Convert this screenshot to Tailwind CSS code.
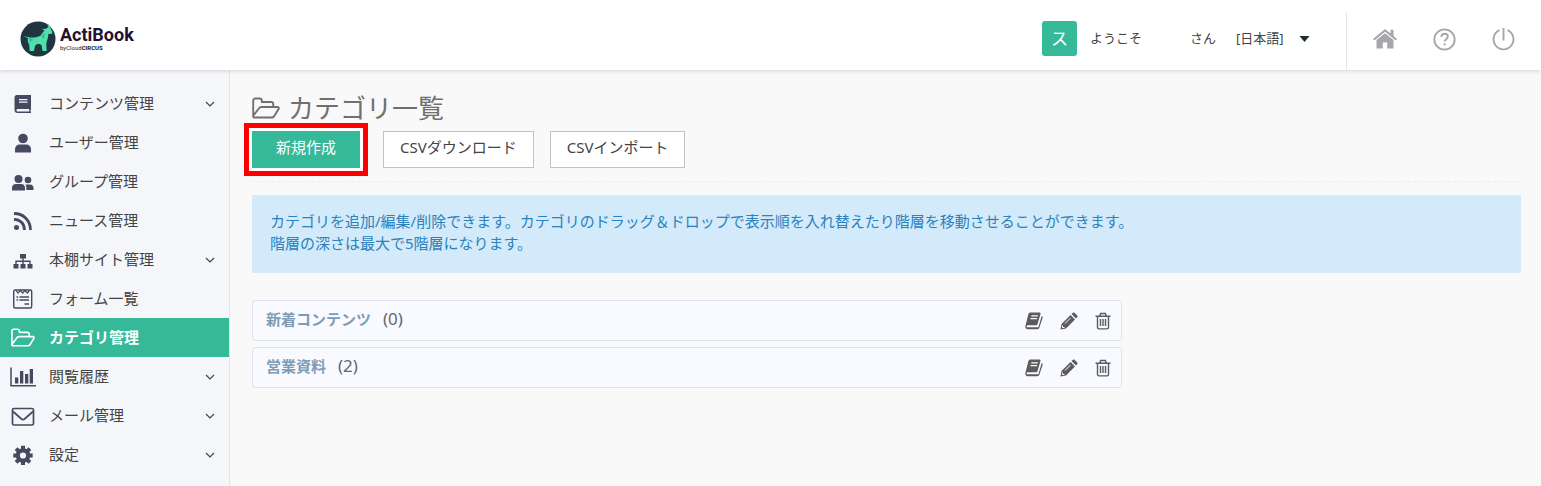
<!DOCTYPE html>
<html lang="ja">
<head>
  <meta charset="UTF-8" />
  <title>カテゴリ一覧 | ActiBook</title>
  <meta name="viewport" content="width=device-width, initial-scale=1" />
  <script src="https://cdn.jsdelivr.net/npm/@tailwindcss/browser@4"></script>
</head>
<body class="min-h-screen flex flex-col bg-[#f9f9f9] text-[#444] text-[15px] font-['Noto_Sans','Noto_Sans_CJK_JP',sans-serif]">

  <!-- Shared icons -->
  <svg class="hidden">
    <symbol id="chevron" viewBox="0 0 10 10"><path d="M1 3l4 4 4-4" fill="none" stroke="currentColor" stroke-width="1.2" /></symbol>
    <symbol id="folder" viewBox="0 0 28 22">
      <path d="M1.200 19V3.500a2 2 0 0 1 2-2h4.600a2 2 0 0 1 2 2V5h9.400a2 2 0 0 1 2 2V10M2.600 20.500h17.200a3 3 0 0 0 2.200-1l4.600-7.500c.6-1.200 0-2-1.200-2H9.500a3 3 0 0 0-2.500 1.200L1.500 18.500c-.7 1.200-.2 2 1.100 2z" fill="none" stroke="currentColor" stroke-width="1.900" stroke-linejoin="round" />
    </symbol>
    <symbol id="book" viewBox="0 0 18 18">
      <path fill-rule="evenodd" d="M5.500 .5h8.700c1 0 1.600.7 1.300 1.600l-3 9.900c-.2.800-.8 1.300-1.600 1.300H2.700c-.7 0-1 .3-1.100.9-.1.700.2 1.100 1.200 1.100h9.600c.6 0 1-.3 1.200-.9L16.700 4c.9.300 1.200 1 .9 1.900l-3.200 9.700c-.3.900-1.100 1.600-2 1.600H2.800c-1.700 0-2.900-1.700-2.400-3.200L3.400 2.100C3.700 1.200 4.500 .5 5.500 .5zM6.500 3.300l-.4 1.300h6.500l.4-1.300zM5.700 6l-.4 1.300h6.500l.4-1.300z" fill="currentColor" />
    </symbol>
    <symbol id="pencil" viewBox="0 0 18 18">
      <path d="M.5 17.500l1-5.500L10.600 3 15 7.400 6 16.500z" fill="currentColor" />
      <path d="M11.500 2.100l1.200-1.200c.6-.6 1.400-.6 2 0l2.400 2.400c.6.600.6 1.400 0 2L15.900 6.500z" fill="currentColor" />
      <path d="M2.500 13.500v2h2M5 11.500l5.500-5.500" fill="none" stroke="#f8faff" stroke-width="1" />
    </symbol>
    <symbol id="trash" viewBox="0 0 16 18">
      <path d="M.5 4.200h15M4.800 4l.8-2.500h4.800l.8 2.500M2.500 4.500v10.700c0 1 .6 1.700 1.500 1.700h8c.9 0 1.500-.7 1.500-1.700V4.500M5.500 7v7M8 7v7M10.500 7v7" fill="none" stroke="currentColor" stroke-width="1.400" />
    </symbol>
  </svg>

  <header class="relative z-10 h-[70px] flex items-stretch justify-between bg-white shadow-[0_1px_4px_rgba(0,0,0,0.15)]">
    <a href="#" class="flex items-center gap-1 pl-5 pt-2">
      <svg class="size-9" viewBox="0 0 36 36">
        <circle cx="18" cy="18" r="17.500" fill="#1f3640" />
        <path d="M3.500 15l5 1.200c4 .8 9 .5 12-1.700l4-5-2.500-1.500 4-.3c.8-.8 1.500-1.200 2.500-1.200-.2-1.500-1-2.500-2-3.500 2.500.8 4 2.500 4.300 5l1.700 3.300-1 1.700-3-.2c-.3 2.500-.6 4.500-1.600 7l-.6 3 .3 7.200h-4l-1-5.500c-1.500-2-5-2-6.500.2L14 30H9.700l-.5-6.500c-1.500-2-1.700-4-1.200-6.300z" fill="#4fe0ae" />
        <path d="M9 17l4 1-3 4zM21 15l4-3-1 6z" fill="#36b992" />
      </svg>
      <span class="flex flex-col text-[#23122f] font-[Roboto,sans-serif]">
        <span class="text-[18px] leading-[18px] font-bold">ActiBook</span>
        <span class="text-[6px] leading-[8px]">byCloud<b>CIRCUS</b></span>
      </span>
    </a>

    <div class="flex items-stretch text-[13px]">
      <div class="flex items-center pt-[7px] pr-8">
        <span class="size-[35px] mr-[13px] flex items-center justify-center rounded-[3px] bg-[#36b998] text-white text-[17px]">ス</span>
        <span class="mr-12">ようこそ</span>
        <span class="mr-5">さん</span>
        <span class="relative flex items-center">
          <select aria-label="言語" class="appearance-none w-[78px] bg-transparent">
            <option>[日本語]</option>
            <option>[English]</option>
          </select>
          <svg class="absolute right-1 w-[11px] h-[6px] pointer-events-none" viewBox="0 0 10 6"><path d="M0 0h10L5 6z" fill="#1f2d33" /></svg>
        </span>
      </div>
      <nav class="mt-3 pl-[26px] pr-[26px] pb-1 flex items-center gap-9 border-l border-[#e6e6e6] text-[#a7a7ab]">
        <a href="#" aria-label="ホーム">
          <svg class="w-6 h-5" viewBox="0 0 24 20">
            <path d="M12 0L0 10l1.300 1.500L12 2.800l10.700 8.700L24 10l-3.500-3V.8h-3v3.700z" fill="currentColor" />
            <path d="M12 4.300L3.500 11.100V19.500h6.300v-6h4.400v6h6.300v-8.400z" fill="currentColor" />
          </svg>
        </a>
        <a href="#" aria-label="ヘルプ">
          <svg class="size-[23px]" viewBox="0 0 23 23" fill="none" stroke="currentColor">
            <circle cx="11.500" cy="11.500" r="10.200" stroke-width="1.800" />
            <path d="M8.300 8.900c.2-2.100 1.500-3.100 3.300-3.100 1.900 0 3.200 1.100 3.200 2.800 0 2.600-3.200 2.500-3.200 5" stroke-width="1.900" />
            <circle cx="11.600" cy="16.300" r=".7" fill="currentColor" />
          </svg>
        </a>
        <a href="#" aria-label="ログアウト">
          <svg class="size-[23px]" viewBox="0 0 23 23" fill="none" stroke="currentColor" stroke-width="1.900">
            <path d="M7.500 2.200a10 10 0 1 0 8 0M11.500 0v12.500" />
          </svg>
        </a>
      </nav>
    </div>
  </header>

  <div class="flex flex-1">
    <nav class="w-[230px] shrink-0 pt-[14px] bg-[#f4f6fa] border-r border-[#e0e3e8]">
      <ul>
        <li>
          <a href="#" class="h-[39px] pl-[10px] pr-[14px] flex items-center gap-[13px]">
            <svg class="w-[26px] h-5 text-[#454a60]" viewBox="0 0 26 20"><path fill-rule="evenodd" d="M7 1h14v14.500c-.8.800-.8 1.800 0 2.500V19H7.500C5.800 19 4.500 17.800 4.500 16V3.500C4.500 2 5.500 1 7 1zm2 4v1.200h8.500V5zm0 2.500v1.200h8.500V7.500zM7.700 15c-1.600 0-1.600 2.600 0 2.600h11.500V15z" fill="currentColor" /></svg>
            <span class="flex-1">コンテンツ管理</span>
            <svg class="size-[10px]"><use href="#chevron" /></svg>
          </a>
        </li>
        <li>
          <a href="#" class="h-[39px] pl-[10px] pr-[14px] flex items-center gap-[13px]">
            <svg class="w-[26px] h-5 text-[#454a60]" viewBox="0 0 26 20"><circle cx="13" cy="5.500" r="4.800" fill="currentColor" /><path d="M5 19.500v-3c0-3 2-5 5-5h6c3 0 5 2 5 5v3z" fill="currentColor" /></svg>
            <span class="flex-1">ユーザー管理</span>
          </a>
        </li>
        <li>
          <a href="#" class="h-[39px] pl-[10px] pr-[14px] flex items-center gap-[13px]">
            <svg class="w-[26px] h-5 text-[#454a60]" viewBox="0 0 26 20" fill="currentColor"><circle cx="8.500" cy="7" r="4" /><path d="M2 18.500v-2.500c0-2.500 1.500-4 4-4h5c2.500 0 4 1.500 4 4v2.500z" /><circle cx="18" cy="8" r="3.300" /><path d="M16.300 18h7.200v-2c0-2-1.300-3.500-3.500-3.500h-4.500c.6.800.8 1.800.8 3z" /></svg>
            <span class="flex-1">グループ管理</span>
          </a>
        </li>
        <li>
          <a href="#" class="h-[39px] pl-[10px] pr-[14px] flex items-center gap-[13px]">
            <svg class="w-[26px] h-5 text-[#454a60]" viewBox="0 0 26 20"><circle cx="6.500" cy="16.500" r="2.500" fill="currentColor" /><path d="M4 8.300c6 0 10.500 4.500 10.500 10.700M4 2.500c9.500 0 16.500 7 16.500 16.500" fill="none" stroke="currentColor" stroke-width="2.800" /></svg>
            <span class="flex-1">ニュース管理</span>
          </a>
        </li>
        <li>
          <a href="#" class="h-[39px] pl-[10px] pr-[14px] flex items-center gap-[13px]">
            <svg class="w-[26px] h-5 text-[#454a60]" viewBox="0 0 26 20"><path d="M10 4h6v4.500h-6zM3.500 14h5v4.500h-5zM10.500 14h5v4.500h-5zM17.500 14h5v4.500h-5z" fill="currentColor" /><path d="M13 8v6M6 14v-2.700h14V14" fill="none" stroke="currentColor" stroke-width="1.400" /></svg>
            <span class="flex-1">本棚サイト管理</span>
            <svg class="size-[10px]"><use href="#chevron" /></svg>
          </a>
        </li>
        <li>
          <a href="#" class="h-[39px] pl-[10px] pr-[14px] flex items-center gap-[13px]">
            <svg class="w-[26px] h-5 text-[#454a60]" viewBox="0 0 26 20" fill="none" stroke="currentColor"><rect x="3.700" y="1" width="18" height="18" rx="1.500" stroke-width="1.400" /><path d="M6 1.500l2 2.500 2.300-2.500L12.700 4 15 1.500 17.300 4l2.200-2.500" stroke-width="1.200" /><path d="M6.500 8h1.700M9.500 8h9.500M6.500 11h1.700M9.500 11h9.500M14.500 15h4.500" stroke-width="1.500" /></svg>
            <span class="flex-1">フォーム一覧</span>
          </a>
        </li>
        <li>
          <a href="#" aria-current="page" class="h-[39px] pl-[10px] pr-[14px] flex items-center gap-[13px] bg-[#36b998] text-white font-bold">
            <svg class="w-[26px] h-[19px]"><use href="#folder" /></svg>
            <span class="flex-1">カテゴリ管理</span>
          </a>
        </li>
        <li>
          <a href="#" class="h-[39px] pl-[10px] pr-[14px] flex items-center gap-[13px]">
            <svg class="w-[26px] h-5 text-[#454a60]" viewBox="0 0 26 20"><path d="M1 .5v18.300h25" fill="none" stroke="currentColor" stroke-width="1.500" /><path d="M5 10.500h3.300V16.500H5zM10 4h3.300v12.500h-3.300zM15 7h3.300v9.500h-3.300zM19.700 2h3.300v14.500h-3.300z" fill="currentColor" /></svg>
            <span class="flex-1">閲覧履歴</span>
            <svg class="size-[10px]"><use href="#chevron" /></svg>
          </a>
        </li>
        <li>
          <a href="#" class="h-[39px] pl-[10px] pr-[14px] flex items-center gap-[13px]">
            <svg class="w-[26px] h-5 text-[#454a60]" viewBox="0 0 26 20" fill="none" stroke="currentColor" stroke-width="1.700"><rect x="2.500" y="2.500" width="21" height="16.500" rx="1.500" /><path d="M3 5.500l8.500 7.500c1 .8 2 .8 3 0l8.500-7.500" /></svg>
            <span class="flex-1">メール管理</span>
            <svg class="size-[10px]"><use href="#chevron" /></svg>
          </a>
        </li>
        <li>
          <a href="#" class="h-[39px] pl-[10px] pr-[14px] flex items-center gap-[13px]">
            <svg class="w-[26px] h-5 text-[#454a60]" viewBox="0 0 26 20" fill="none" stroke="currentColor"><circle cx="13" cy="10.500" r="5.200" stroke-width="4.200" /><path d="M13 .8v3.500M13 16.700v3.300M3.300 10.500h3.500M19.200 10.500h3.500M6.100 3.600l2.500 2.500M17.400 14.900l2.500 2.500M6.100 17.400l2.500-2.500M17.400 6.100l2.500-2.500" stroke-width="4" /></svg>
            <span class="flex-1">設定</span>
            <svg class="size-[10px]"><use href="#chevron" /></svg>
          </a>
        </li>
      </ul>
    </nav>

    <main class="flex-1 pl-[22px] pr-5 pt-5">
      <h1 class="flex items-center gap-2 h-9 text-[26px] text-[#707070]">
        <svg class="w-7 h-[22px]"><use href="#folder" /></svg>
        カテゴリ一覧
      </h1>

      <div class="flex pt-[5px] pb-[13px] border-b border-dashed border-[#ececec]">
        <button class="h-[37px] px-6 pb-1 mr-[23px] bg-[#36b998] text-white ring-3 ring-white outline-[5px] outline-offset-3 outline-solid outline-[#ff0000]">新規作成</button>
        <button class="h-[37px] px-4 pb-1 mr-4 bg-white border border-[#bcc3c9]">CSVダウンロード</button>
        <button class="h-[37px] px-4 pb-1 bg-white border border-[#bcc3c9]">CSVインポート</button>
      </div>

      <p class="mt-[13px] mb-[27px] px-[18px] pt-[15px] pb-[19px] bg-[#d2eafa] text-[#2b82bc] leading-[22px]">
        カテゴリを追加/編集/削除できます。カテゴリのドラッグ＆ドロップで表示順を入れ替えたり階層を移動させることができます。<br />
        階層の深さは最大で5階層になります。
      </p>

      <!-- Category list -->
      <ul class="max-w-[870px] flex flex-col gap-[6px]">
        <li class="h-[41px] pl-[13px] pr-[10px] flex items-center gap-3 bg-[#f8faff] border border-[#dde4ea] rounded-[3px]">
          <a href="#" class="pb-[3px] font-bold text-[#7d9cb5]">新着コンテンツ</a>
          <span class="flex-1 pb-[3px] text-[17px] text-[#666]">(0)</span>
          <div class="flex gap-[17px] text-[#5c5c5c]">
            <button aria-label="コンテンツ"><svg class="size-[18px]"><use href="#book" /></svg></button>
            <button aria-label="編集"><svg class="size-[18px]"><use href="#pencil" /></svg></button>
            <button aria-label="削除"><svg class="w-4 h-[18px]"><use href="#trash" /></svg></button>
          </div>
        </li>
        <li class="h-[41px] pl-[13px] pr-[10px] flex items-center gap-3 bg-[#f8faff] border border-[#dde4ea] rounded-[3px]">
          <a href="#" class="pb-[3px] font-bold text-[#7d9cb5]">営業資料</a>
          <span class="flex-1 pb-[3px] text-[17px] text-[#666]">(2)</span>
          <div class="flex gap-[17px] text-[#5c5c5c]">
            <button aria-label="コンテンツ"><svg class="size-[18px]"><use href="#book" /></svg></button>
            <button aria-label="編集"><svg class="size-[18px]"><use href="#pencil" /></svg></button>
            <button aria-label="削除"><svg class="w-4 h-[18px]"><use href="#trash" /></svg></button>
          </div>
        </li>
      </ul>
    </main>
  </div>
</body>
</html>
